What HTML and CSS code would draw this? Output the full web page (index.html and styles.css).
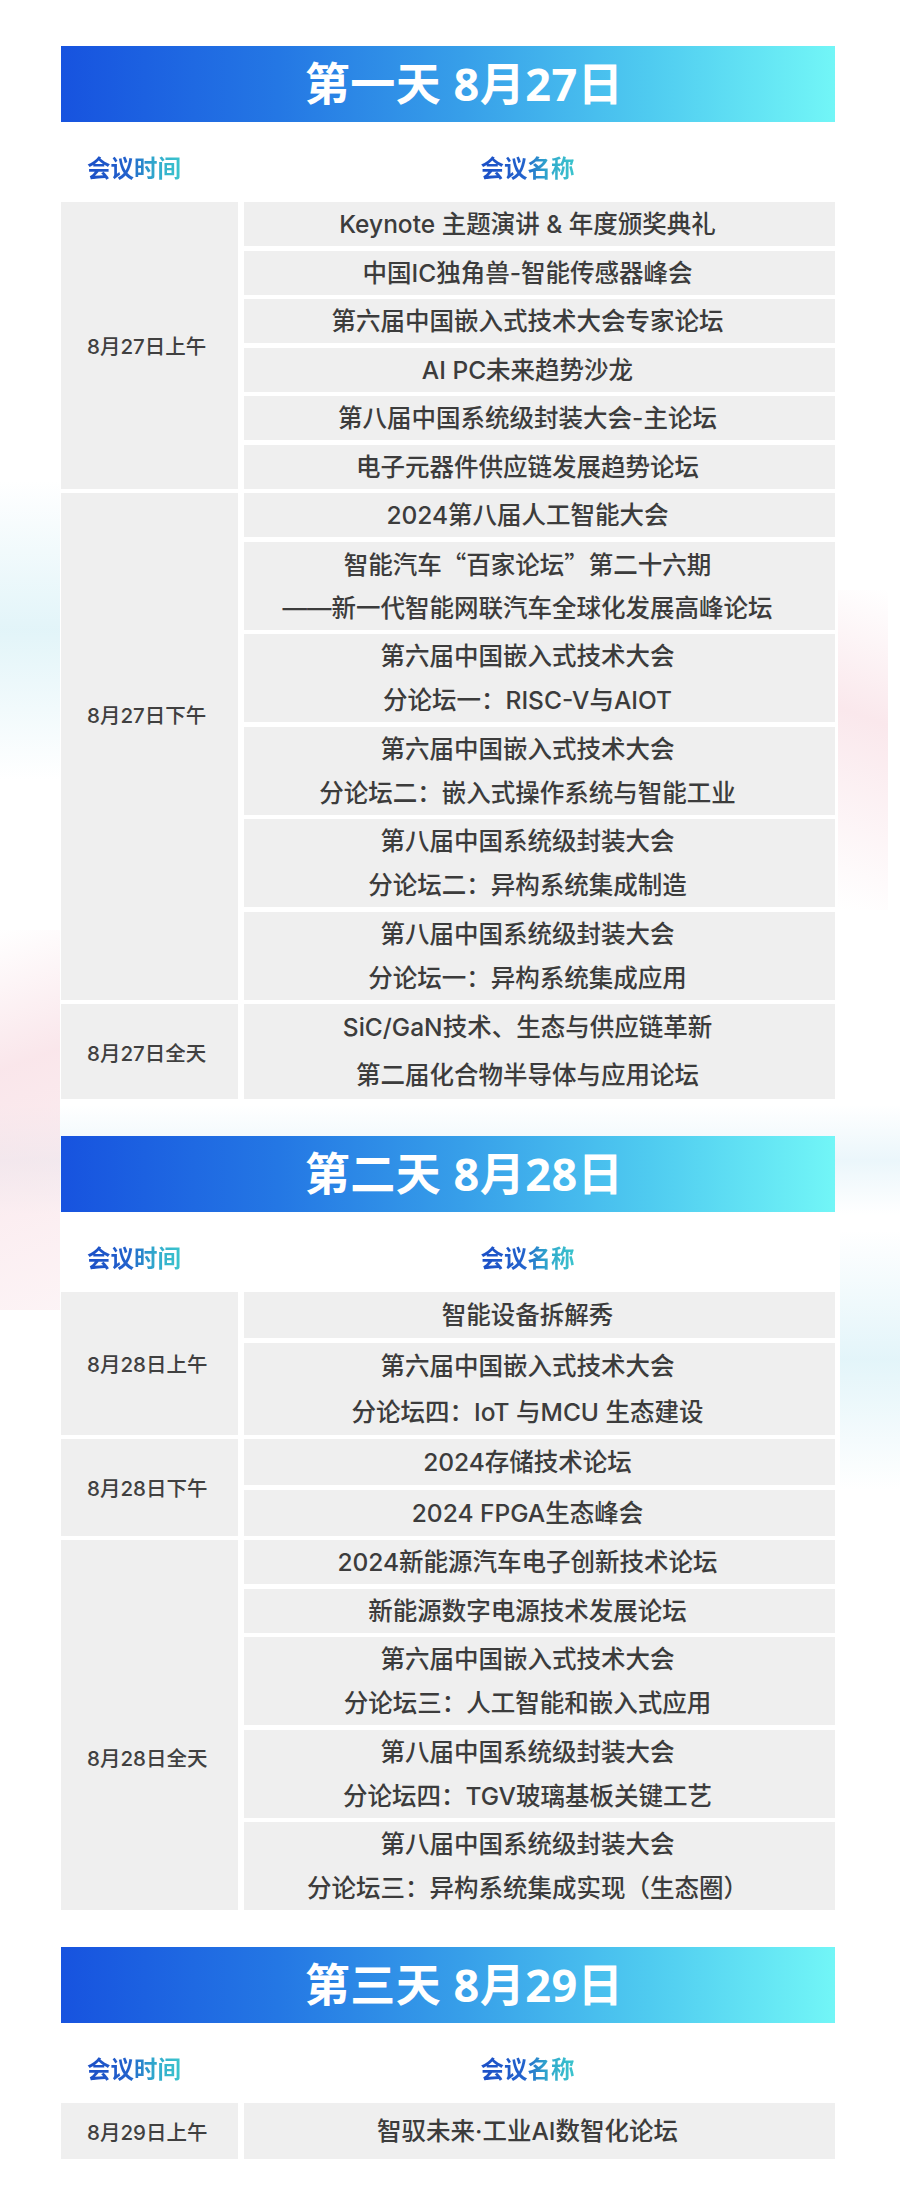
FILE: index.html
```html
<!DOCTYPE html>
<html lang="zh-CN">
<head>
<meta charset="utf-8">
<title>会议日程</title>
<link rel="stylesheet" href="styles.css">
</head>
<body>
<main class="schedule">
  <section class="day">
    <h2 class="banner">第一天 8月27日</h2>
    <div class="cols-head"><span class="head-time">会议时间</span><span class="head-name">会议名称</span></div>
    <div class="group">
      <div class="when">8月27日上午</div>
      <ul class="items">
        <li class="item"><span class="line">Keynote 主题演讲 &amp; 年度颁奖典礼</span></li>
        <li class="item"><span class="line">中国IC独角兽-智能传感器峰会</span></li>
        <li class="item"><span class="line">第六届中国嵌入式技术大会专家论坛</span></li>
        <li class="item"><span class="line">AI PC未来趋势沙龙</span></li>
        <li class="item"><span class="line">第八届中国系统级封装大会-主论坛</span></li>
        <li class="item"><span class="line">电子元器件供应链发展趋势论坛</span></li>
      </ul>
    </div>
    <div class="group">
      <div class="when when--up">8月27日下午</div>
      <ul class="items">
        <li class="item"><span class="line">2024第八届人工智能大会</span></li>
        <li class="item"><span class="line">智能汽车<span class="cjk">“</span>百家论坛<span class="cjk">”</span>第二十六期</span><span class="line">——新一代智能网联汽车全球化发展高峰论坛</span></li>
        <li class="item"><span class="line">第六届中国嵌入式技术大会</span><span class="line">分论坛一：RISC-V与AIOT</span></li>
        <li class="item"><span class="line">第六届中国嵌入式技术大会</span><span class="line">分论坛二：嵌入式操作系统与智能工业</span></li>
        <li class="item"><span class="line">第八届中国系统级封装大会</span><span class="line">分论坛二：异构系统集成制造</span></li>
        <li class="item"><span class="line">第八届中国系统级封装大会</span><span class="line">分论坛一：异构系统集成应用</span></li>
      </ul>
    </div>
    <div class="group group--tall">
      <div class="when">8月27日全天</div>
      <ul class="items">
        <li class="item"><span class="line">SiC/GaN技术、生态与供应链革新</span><span class="line">第二届化合物半导体与应用论坛</span></li>
      </ul>
    </div>
  </section>

  <section class="day">
    <h2 class="banner">第二天 8月28日</h2>
    <div class="cols-head"><span class="head-time">会议时间</span><span class="head-name">会议名称</span></div>
    <div class="group group--roomy">
      <div class="when">8月28日上午</div>
      <ul class="items">
        <li class="item"><span class="line">智能设备拆解秀</span></li>
        <li class="item"><span class="line">第六届中国嵌入式技术大会</span><span class="line">分论坛四：IoT 与MCU 生态建设</span></li>
      </ul>
    </div>
    <div class="group group--roomy">
      <div class="when">8月28日下午</div>
      <ul class="items">
        <li class="item"><span class="line">2024存储技术论坛</span></li>
        <li class="item"><span class="line">2024 FPGA生态峰会</span></li>
      </ul>
    </div>
    <div class="group">
      <div class="when when--down">8月28日全天</div>
      <ul class="items">
        <li class="item"><span class="line">2024新能源汽车电子创新技术论坛</span></li>
        <li class="item"><span class="line">新能源数字电源技术发展论坛</span></li>
        <li class="item"><span class="line">第六届中国嵌入式技术大会</span><span class="line">分论坛三：人工智能和嵌入式应用</span></li>
        <li class="item"><span class="line">第八届中国系统级封装大会</span><span class="line">分论坛四：TGV玻璃基板关键工艺</span></li>
        <li class="item"><span class="line">第八届中国系统级封装大会</span><span class="line">分论坛三：异构系统集成实现（生态圈）</span></li>
      </ul>
    </div>
  </section>

  <section class="day">
    <h2 class="banner">第三天 8月29日</h2>
    <div class="cols-head"><span class="head-time">会议时间</span><span class="head-name">会议名称</span></div>
    <div class="group group--single">
      <div class="when">8月29日上午</div>
      <ul class="items">
        <li class="item"><span class="line">智驭未来·工业AI数智化论坛</span></li>
      </ul>
    </div>
  </section>
</main>
</body>
</html>
```

FILE: styles.css
```css
html, body {
  margin: 0;
  padding: 0;
}

body {
  min-height: 2199px;
  background-color: #ffffff;
  background-image:
    linear-gradient(160deg, rgba(248, 222, 228, 0) 0%, rgba(248, 222, 228, 0.75) 35%, rgba(248, 222, 228, 0.35) 100%),
    linear-gradient(200deg, rgba(248, 222, 228, 0) 0%, rgba(248, 222, 228, 0.7) 40%, rgba(248, 222, 228, 0) 100%),
    linear-gradient(180deg, rgba(214, 240, 246, 0) 0%, rgba(214, 240, 246, 0.7) 50%, rgba(214, 240, 246, 0) 100%),
    linear-gradient(180deg, rgba(220, 242, 248, 0) 0%, rgba(220, 242, 248, 0.8) 50%, rgba(220, 242, 248, 0) 100%),
    linear-gradient(180deg, rgba(230, 244, 250, 0) 0%, rgba(230, 244, 250, 0.8) 50%, rgba(230, 244, 250, 0) 100%);
  background-repeat: no-repeat;
  background-size:
    60px 380px,
    50px 320px,
    60px 300px,
    60px 260px,
    900px 110px;
  background-position:
    0 930px,
    838px 590px,
    0 480px,
    840px 1230px,
    0 1105px;
  font-family: "Inter", "Noto Sans CJK SC", sans-serif;
  color: #3c3c3c;
}

.schedule {
  width: 774px;
  margin-left: 61px;
  padding-top: 46px;
}

.day + .day {
  margin-top: 37px;
}

.day {
  display: flex;
  flex-direction: column;
  gap: 4.5px;
}

.banner {
  margin: 0;
  height: 76px;
  padding-left: 32px;
  display: flex;
  align-items: center;
  justify-content: center;
  background: linear-gradient(90deg, #1753df 0%, #2477e4 28%, #379fe9 52%, #4fcbf0 76%, #72f6f7 100%);
  color: #ffffff;
  font-family: "Open Sans", "Noto Sans CJK SC", sans-serif;
  font-size: 45px;
  font-weight: 700;
  line-height: 76px;
  letter-spacing: 0.5px;
  box-sizing: border-box;
}

.cols-head {
  display: grid;
  grid-template-columns: 177px 591px;
  column-gap: 6px;
  height: 80px;
  margin: -4.5px 0;
  padding-top: 22px;
  box-sizing: border-box;
  font-family: "Noto Sans CJK SC", sans-serif;
  font-size: 23.5px;
  font-weight: 700;
  line-height: 46px;
}

.head-time,
.head-name {
  justify-self: start;
  height: 46px;
  background: linear-gradient(90deg, #1c4fc6 0%, #2262cc 45%, #2fa6cc 70%, #3cc5cd 100%);
  -webkit-background-clip: text;
  background-clip: text;
  color: transparent;
}

.head-time {
  margin-left: 26px;
}

.head-name {
  justify-self: center;
  margin-right: 24px;
}

.group {
  --lh: 44px;
  display: grid;
  grid-template-columns: 177px 591px;
  column-gap: 6px;
}

.group--roomy {
  --lh: 46px;
}

.group--tall {
  --lh: 47.5px;
}

.group--single {
  --lh: 56px;
}

.when {
  display: flex;
  align-items: center;
  padding-left: 26px;
  background: #efefef;
  font-size: 20.5px;
  font-weight: 500;
  color: #404040;
}

.when--up {
  padding-bottom: 64px;
}

.when--down {
  padding-top: 64px;
}

.items {
  list-style: none;
  margin: 0;
  padding: 0;
  display: flex;
  flex-direction: column;
  gap: 4.5px;
}

.item {
  display: flex;
  flex-direction: column;
  background: #efefef;
  padding-right: 24px;
  font-size: 24.5px;
  font-weight: 500;
  color: #3c3c3c;
}

.line {
  display: block;
  height: var(--lh);
  line-height: var(--lh);
  text-align: center;
  white-space: nowrap;
}

.cjk {
  font-family: "Noto Sans CJK SC", sans-serif;
}
```
